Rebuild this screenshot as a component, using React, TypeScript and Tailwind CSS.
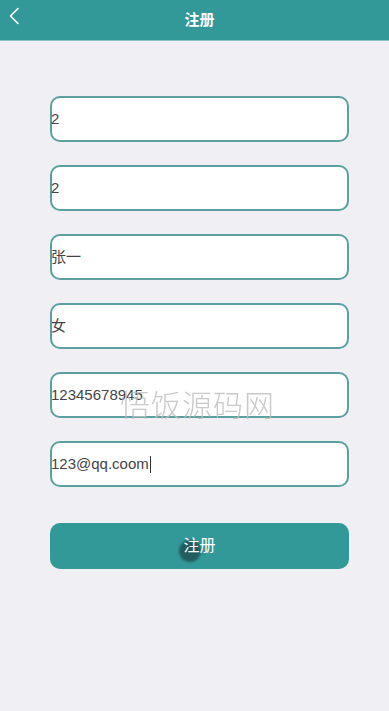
const fields = ["2", "2", "张一", "女", "12345678945", "123@qq.coom"]

function App() {
  return (
    <div className="relative min-h-[711px] bg-[#efeff4] font-['Liberation_Sans','Noto_Sans_CJK_SC',sans-serif]">
      <header className="relative flex h-[40px] items-center justify-center bg-[#339898] pl-[10px] shadow-[0_1px_0_#8cc4c4]">
        <svg
          className="absolute left-[8px] top-[7px] h-[18px] w-[12px]"
          viewBox="0 0 12 18"
          fill="none"
          stroke="white"
          strokeWidth="1.6"
          strokeLinecap="round"
          strokeLinejoin="round"
        >
          <path d="M10 1.5 L2.5 9 L10 16.5" />
        </svg>
        <h1 className="text-center text-[15px] font-bold text-white">注册</h1>
      </header>

      <main className="px-[50px] pt-[56px] pr-[40px]">
        <div className="flex flex-col gap-[23px]">
          {fields.map((v, i) => (
            <div
              key={i}
              className="flex h-[46px] items-center rounded-[10px] border-2 border-[#5b9fa0] bg-white"
            >
              <span className="-ml-px text-[15px] text-[#444]">{v}</span>
              {i === fields.length - 1 && <span className="ml-px h-[17px] w-px bg-[#333]" />}
            </div>
          ))}
        </div>

        <button className="relative mt-[36px] flex h-[46px] w-full items-center justify-center rounded-[10px] bg-[#339898] text-[16px] text-white">
          <span className="absolute left-[129px] top-[17px] h-[22px] w-[22px] rounded-full bg-[#1f4f4f] opacity-80 blur-[1px]" />
          <span className="relative">注册</span>
        </button>
      </main>

      <div className="pointer-events-none absolute left-[120px] top-[381px] text-[30px] font-light tracking-[1px] text-[#bdbdbd] opacity-80 font-['Noto_Sans_CJK_SC',serif]">
        悟饭源码网
      </div>
    </div>
  )
}

export default App
